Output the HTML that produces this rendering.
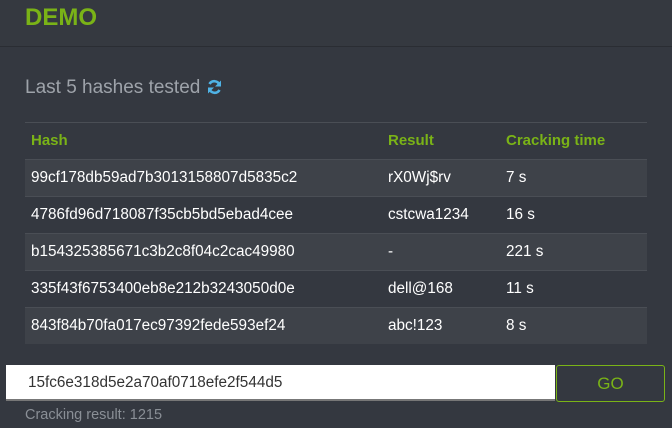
<!DOCTYPE html>
<html><head><style>
body{margin:0;width:672px;height:428px;background:#343840;font-family:"Liberation Sans",sans-serif;overflow:hidden;position:relative}
.hd{position:absolute;left:0;top:0;width:672px;height:46px;background:#353940;border-bottom:1px solid #2a2d33}
.hd span{position:absolute;left:25px;top:4px;color:#7ab317;font-size:24px;font-weight:bold}
.t{position:absolute;left:25px;top:77px;color:#9ea3aa;font-size:19px}
table{position:absolute;left:25px;top:122px;width:622px;border-collapse:collapse;font-size:15.3px;color:#fff}
td,th{height:36px;padding:0 0 0 6px;text-align:left;vertical-align:middle;border-top:1px solid #4a4e55;line-height:18px}
th{color:#7ab317;font-size:15px}
tr.o td{background:#3e4249}
.in{position:absolute;left:6px;top:365px;width:549px;height:36px;background:#fff;border-bottom:2px solid #777;box-sizing:border-box;padding-left:22px;line-height:36px;font-size:15.3px;color:#333}
.go{position:absolute;left:556px;top:365px;width:109px;height:37px;box-sizing:border-box;border:1px solid #7ab317;border-radius:3px;color:#7ab317;text-align:center;line-height:35px;font-size:17px}
.r{position:absolute;left:25px;top:407px;color:#8a8f96;font-size:14.5px}
</style></head><body>
<div class="hd"><span>DEMO</span></div>
<div class="t">Last 5 hashes tested <svg width="17" height="16" viewBox="0 0 16 16" style="vertical-align:-2px"><path d="M13 6A5.5 5.5 0 0 0 3 5" stroke="#4fb3e6" stroke-width="2.6" fill="none"/><path d="M14.5 1.5v6h-6z" fill="#4fb3e6"/><path d="M3 10a5.5 5.5 0 0 0 10 1" stroke="#4fb3e6" stroke-width="2.6" fill="none"/><path d="M1.5 14.5v-6h6z" fill="#4fb3e6"/></svg></div>
<table>
<tr><th style="width:351px">Hash</th><th style="width:112px">Result</th><th>Cracking time</th></tr>
<tr class="o"><td>99cf178db59ad7b3013158807d5835c2</td><td>rX0Wj$rv</td><td>7 s</td></tr>
<tr><td>4786fd96d718087f35cb5bd5ebad4cee</td><td>cstcwa1234</td><td>16 s</td></tr>
<tr class="o"><td>b154325385671c3b2c8f04c2cac49980</td><td>-</td><td>221 s</td></tr>
<tr><td>335f43f6753400eb8e212b3243050d0e</td><td>dell@168</td><td>11 s</td></tr>
<tr class="o"><td>843f84b70fa017ec97392fede593ef24</td><td>abc!123</td><td>8 s</td></tr>
</table>
<div class="in">15fc6e318d5e2a70af0718efe2f544d5</div>
<div class="go">GO</div>
<div class="r">Cracking result: 1215</div>
</body></html>
